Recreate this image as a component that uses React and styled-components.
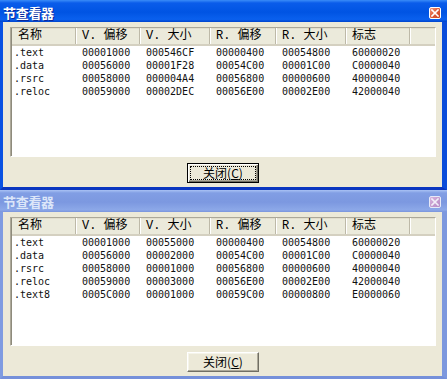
import React from "react";
import styled, { createGlobalStyle, css } from "styled-components";

const Global = createGlobalStyle`
  html, body { margin: 0; padding: 0; background: #ECE9D8; }
  body { width: 447px; height: 379px; overflow: hidden; font-family: "Noto Sans CJK SC", sans-serif; }
`;

const Screen = styled.div`
  display: flex;
  flex-direction: column;
  width: 447px;
`;

const Win = styled.section`
  height: ${(p) => p.$h}px;
  display: flex;
  flex-direction: column;
  flex: none;
`;

const TitleBar = styled.header`
  height: 22px;
  flex: none;
  box-sizing: border-box;
  display: flex;
  align-items: center;
  justify-content: space-between;
  padding: ${(p) => p.$shift}px 6px 0 3px;
  ${(p) =>
    p.$active
      ? css`
          background: linear-gradient(#3A8CF8 0, #0A5CEA 3px, #0054E3 55%, #0A60EE 88%, #0044CC 100%);
          color: #fff;
          text-shadow: 1px 1px 0 #0A2A9C;
        `
      : css`
          background: linear-gradient(#A9C2F4 0, #819EE4 3px, #7C98E0 55%, #8CA8E8 90%, #7A95DC 100%);
          color: #DCE6F9;
        `}
`;

const Title = styled.span`
  font-family: "Noto Sans CJK SC", sans-serif;
  font-weight: 700;
  font-size: 13px;
  letter-spacing: -0.3px;
  line-height: 14px;
`;

const CloseBtn = styled.span`
  width: 12px;
  height: 12px;
  box-sizing: border-box;
  border-radius: 2px;
  display: flex;
  align-items: center;
  justify-content: center;
  ${(p) =>
    p.$active
      ? css`
          border: 1px solid #fff;
          background: linear-gradient(135deg, #F09A7E 0%, #E0603D 45%, #C8401E 100%);
        `
      : css`
          border: 1px solid #E6E9F8;
          background: linear-gradient(135deg, #D8B6DE 0%, #C59CCF 50%, #B58CC6 100%);
        `}
`;

const Frame = styled.div`
  flex: 1;
  display: flex;
  flex-direction: column;
  background: #ECE9D8;
  border-style: solid;
  border-width: 0 5px 3px 3px;
  border-color: ${(p) => (p.$active ? "#0A52E2 #0A4CDA #0A36C0 #0A52E2" : "#7F9BE1 #7D98DE #7590DA #7F9BE1")};
`;

const Content = styled.div`
  flex: 1;
  display: flex;
  flex-direction: column;
  padding: 5px 6px 0 7px;
`;

const ListView = styled.div`
  flex: 1;
  background: #fff;
  border: 1px solid;
  border-color: #ACA899 #FFFFFF #FFFFFF #ACA899;
  box-shadow: inset 1px 1px 0 #8E8B7C;
  display: flex;
  flex-direction: column;
`;

const cols = "64px 64px 70px 66px 70px 64px 1fr";

const Header = styled.div`
  display: grid;
  grid-template-columns: ${cols};
  height: 16px;
  margin-left: 1px;
  background: #EBEADB;
  border-bottom: 2px solid #D4D0C0;
  box-shadow: 0 1px 0 #E2DECD inset;
`;

const HeaderCell = styled.div`
  padding-left: 6px;
  font-family: "Liberation Mono", "Noto Sans CJK SC", monospace;
  font-size: 12px;
  line-height: 16px;
  color: #000;
  white-space: pre;
  border-right: ${(p) => (p.$last ? "none" : "1px solid #BDB9A8")};
  box-shadow: ${(p) => (p.$last ? "none" : "1px 0 0 #FFFFFF")};
`;

const Row = styled.div`
  display: grid;
  grid-template-columns: ${cols};
  height: 13px;
  margin-left: 1px;
`;

const Cell = styled.div`
  padding-left: ${(p) => (p.$first ? 2 : 6)}px;
  font-family: "DejaVu Sans Mono", monospace;
  font-size: 10px;
  line-height: 13px;
  color: #111;
  white-space: pre;
`;

const ButtonRow = styled.div`
  display: flex;
  justify-content: center;
  padding: 6px 0 4px;
`;

const Button = styled.button`
  width: 72px;
  height: 20px;
  box-sizing: border-box;
  padding: 0;
  margin: 0;
  display: flex;
  align-items: stretch;
  background: #ECE9D8;
  font-family: "Noto Sans CJK SC", sans-serif;
  font-size: 12px;
  color: #000;
  border: 1px solid;
  border-color: #FFFFFF #716F64 #716F64 #FFFFFF;
  box-shadow: inset -1px -1px 0 #ACA899, inset 1px 1px 0 #F5F4EA;
  ${(p) =>
    p.$default &&
    css`
      border-color: #000;
      box-shadow: inset 1px 1px 0 #FFFFFF, inset -1px -1px 0 #716F64, inset -2px -2px 0 #ACA899;
    `}
`;

const ButtonFace = styled.span`
  flex: 1;
  margin: 2px;
  display: flex;
  align-items: center;
  justify-content: center;
  line-height: 12px;
  border: 1px ${(p) => (p.$focus ? "dotted #000" : "solid transparent")};
  u { text-decoration: underline; }
`;

const headers = ["名称", "V. 偏移", "V. 大小", "R. 偏移", "R. 大小", "标志", ""];

const dataA = [
  [".text", "00001000", "000546CF", "00000400", "00054800", "60000020"],
  [".data", "00056000", "00001F28", "00054C00", "00001C00", "C0000040"],
  [".rsrc", "00058000", "000004A4", "00056800", "00000600", "40000040"],
  [".reloc", "00059000", "00002DEC", "00056E00", "00002E00", "42000040"],
];

const dataB = [
  [".text", "00001000", "00055000", "00000400", "00054800", "60000020"],
  [".data", "00056000", "00002000", "00054C00", "00001C00", "C0000040"],
  [".rsrc", "00058000", "00001000", "00056800", "00000600", "40000040"],
  [".reloc", "00059000", "00003000", "00056E00", "00002E00", "42000040"],
  [".text8", "0005C000", "00001000", "00059C00", "00000800", "E0000060"],
];

function CloseIcon({ active }) {
  return (
    <CloseBtn $active={active}>
      <svg width="8" height="8" viewBox="0 0 8 8">
        <path d="M1 1 L7 7 M7 1 L1 7" stroke={active ? "#fff" : "#F2EEF8"} strokeWidth="1.6" strokeLinecap="square" />
      </svg>
    </CloseBtn>
  );
}

function SectionWindow({ active, height, shift, rows }) {
  return (
    <Win $h={height}>
      <TitleBar $active={active} $shift={shift}>
        <Title>节查看器</Title>
        <CloseIcon active={active} />
      </TitleBar>
      <Frame $active={active}>
        <Content>
          <ListView>
            <Header>
              {headers.map((h, i) => (
                <HeaderCell key={i} $last={i === headers.length - 1}>
                  {h}
                </HeaderCell>
              ))}
            </Header>
            {rows.map((r, i) => (
              <Row key={i}>
                {r.map((c, j) => (
                  <Cell key={j} $first={j === 0}>
                    {c}
                  </Cell>
                ))}
              </Row>
            ))}
          </ListView>
          <ButtonRow>
            <Button $default={active}>
              <ButtonFace $focus={active}>
                关闭(<u>C</u>)
              </ButtonFace>
            </Button>
          </ButtonRow>
        </Content>
      </Frame>
    </Win>
  );
}

export default function App() {
  return (
    <>
      <Global />
      <Screen>
        <SectionWindow active height={190} shift={3} rows={dataA} />
        <SectionWindow active={false} height={189} shift={1} rows={dataB} />
      </Screen>
    </>
  );
}
